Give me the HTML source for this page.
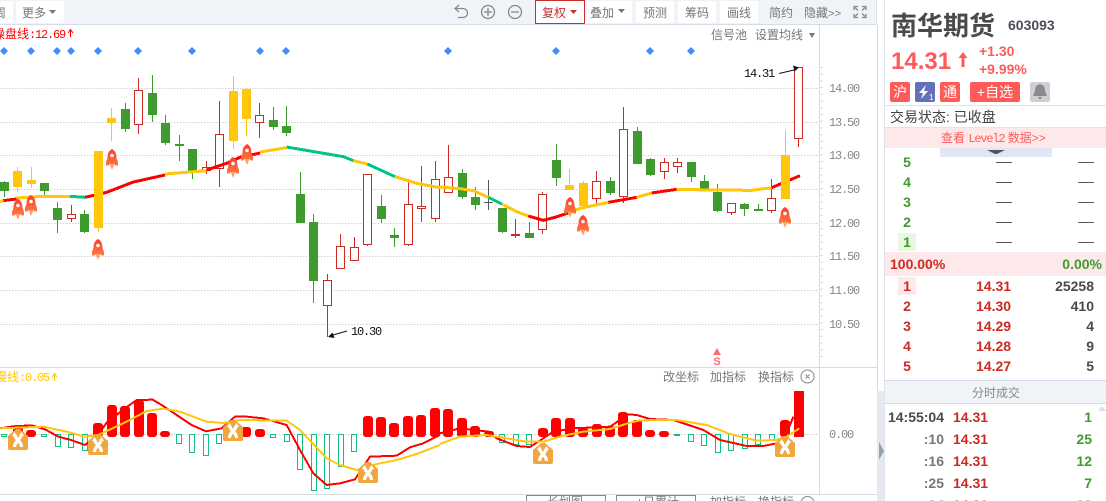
<!DOCTYPE html>
<html lang="zh"><head><meta charset="utf-8"><title>南华期货</title>
<style>
html,body{margin:0;padding:0;background:#fff;width:1106px;height:501px;overflow:hidden}
svg{display:block}
text{font-family:"Liberation Sans","Noto Sans CJK SC",sans-serif}
.c{font-size:12px;fill:#777;font-family:"Liberation Sans","Noto Sans CJK SC",sans-serif}
.m{font-family:"Liberation Mono","Noto Sans CJK SC",monospace;font-size:12px;letter-spacing:-1.2px}
.b{font-weight:bold;font-size:14px}
.g{fill:#3f9a2f}.r{fill:#cc2a22}.k{fill:#4a4a4a}
</style></head><body>
<svg width="1106" height="501" viewBox="0 0 1106 501" xmlns="http://www.w3.org/2000/svg">
<defs>
<linearGradient id="rg" x1="0" y1="0" x2="0" y2="1"><stop offset="0" stop-color="#ff3a30"/><stop offset="1" stop-color="#ff7a40"/></linearGradient>
<symbol id="rk" viewBox="0 0 12 21"><path d="M6 0C9.500 2 10.500 5 10.500 9L12 13V16.500H9.500L8.500 15H3.500L2.500 16.500H0V13L1.500 9C1.500 5 2.500 2 6 0Z" fill="url(#rg)"/><circle cx="6" cy="6.500" r="1.800" fill="#fff"/><path d="M3.500 15H8.500L6 21Z" fill="#ffa070"/></symbol>
<symbol id="xx" viewBox="0 0 20 21"><path d="M0 7L8 0H12L20 7V19Q20 21 18 21H2Q0 21 0 19Z" fill="#f2a640"/><path d="M6.500 5C6.500 10 13.500 12 13.500 18M13.500 5C13.500 10 6.500 12 6.500 18" fill="none" stroke="#fff" stroke-width="3.200"/><path d="M4 7L6.500 3L9 7M11 7L13.500 3L16 7" fill="#fff"/></symbol>
</defs>

<!-- toolbar -->
<rect x="0" y="0" width="877" height="24" fill="#f0f4f9"/>
<rect x="0" y="24" width="877" height="1" fill="#d6dde8"/>
<rect x="0" y="1" width="13" height="22" fill="#fff"/>
<text x="-6" y="17" class="c">周</text>
<rect x="16" y="1" width="48" height="22" fill="#fff"/>
<text x="22" y="17" class="c">更多</text>
<path d="M49 10H56L52.500 14Z" fill="#777"/>

<g fill="none" stroke="#888" stroke-width="1.300">
<path d="M456 8.500H463A4.500 4.500 0 0 1 463 17.500H458"/><path d="M459 5L455 8.500L459 12"/>
<circle cx="488" cy="12" r="6.500"/><path d="M484 12H492M488 8V16"/>
<circle cx="515" cy="12" r="6.500"/><path d="M511 12H519"/>
<path d="M854 10V6.500H858M862 6.500H866V10M866 14V17.500H862M858 17.500H854V14M855 7.500L858 10.500M865 7.500L862 10.500M865 16.500L862 13.500M855 16.500L858 13.500"/>
</g>
<rect x="535.500" y="0.500" width="49" height="23" fill="#fff" stroke="#c9302c"/>
<text x="542" y="17" class="c" style="fill:#c9302c">复权</text>
<path d="M570 10H577L573.500 14Z" fill="#c9302c"/>
<rect x="587" y="1" width="45" height="22" fill="#fff"/><text x="590" y="17" class="c">叠加</text><path d="M618 9H625L621.500 13Z" fill="#777"/>
<rect x="636" y="1" width="38" height="22" fill="#fff"/><text x="643" y="17" class="c">预测</text>
<rect x="678" y="1" width="38" height="22" fill="#fff"/><text x="685" y="17" class="c">筹码</text>
<rect x="720" y="1" width="38" height="22" fill="#fff"/><text x="727" y="17" class="c">画线</text>
<text x="769" y="17" class="c">简约</text>
<text x="804" y="17" class="c">隐藏<tspan class="m" style="letter-spacing:0;font-size:11px">&gt;&gt;</tspan></text>

<!-- grid -->
<g stroke="#d0d0d0" stroke-dasharray="1.500 1.500" fill="none">
<path d="M0 88.500H819M0 122.500H819M0 155.500H819M0 189.500H819M0 223.500H819M0 256.500H819M0 290.500H819M0 324.500H819"/>
<path d="M0 434.500H819"/>
</g>
<!-- axes -->
<g fill="none" stroke="#d6dbe6">
<path d="M819.500 25V494M877.500 25V391M0 367.500H877M0 494.500H877"/>
<path d="M821.500 67V361" stroke-dasharray="1 5.720" style="stroke-width:3"/>
</g>

<text x="-7" y="38" style="font-size:12px;fill:#f00">操盘线<tspan class="m" style="fill:#f00">:12.69</tspan></text>
<path d="M70.500 37V30M68 33L70.500 29.500L73 33" fill="none" stroke="#f00"/>
<text x="711" y="39" class="c">信号池</text><text x="755" y="39" class="c">设置均线</text>
<path d="M809 33H815L812 38Z" fill="#777"/>

<!-- diamonds -->
<g fill="#3f8efc">
<path d="M4 47L8 51L4 55L0 51Z M31 47L35 51L31 55L27 51Z M57 47L61 51L57 55L53 51Z M71 47L75 51L71 55L67 51Z M98 47L102 51L98 55L94 51Z M138 47L142 51L138 55L134 51Z M192 47L196 51L192 55L188 51Z M260 47L264 51L260 55L256 51Z M286 47L290 51L286 55L282 51Z M448 47L452 51L448 55L444 51Z M556 47L560 51L556 55L552 51Z M650 47L654 51L650 55L646 51Z M691 47L695 51L691 55L687 51Z"/>
</g>

<!-- candles -->
<g shape-rendering="crispEdges">
<!-- green -->
<path fill="none" stroke="#3f9a2f" d="M4.500 181V197M44.500 183V195M57.500 202V233M84.500 210V233M125.500 103V132M152.500 75V122M165.500 115V145M179.500 135V161M192.500 149V179M273.500 107V130M286.500 106V136M300.500 172V223M313.500 214V303M381.500 195V223M394.500 228V247M462.500 169V199M475.500 187V210M502.500 208V233M529.500 222V238M556.500 144V186M610.500 177V195M637.500 127V164M650.500 158V176M691.500 162V182M704.500 175V190M717.500 184V212M744.500 203V216M758.500 204V211"/>
<path fill="#3f9a2f" d="M0 182H9V191H0ZM40 183H49V191H40ZM53 208H62V220H53ZM80 214H89V232H80ZM121 109H130V129H121ZM148 93H157V115H148ZM161 123H170V143H161ZM175 144H184V146H175ZM188 149H197V171H188ZM269 120H278V127H269ZM282 126H291V133H282ZM296 194H305V223H296ZM309 222H318V281H309ZM377 206H386V219H377ZM390 235H399V238H390ZM458 173H467V197H458ZM471 197H480V205H471ZM498 208H507V232H498ZM525 233H534V238H525ZM552 160H561V178H552ZM606 181H615V193H606ZM633 131H642V164H633ZM646 159H655V175H646ZM687 162H696V177H687ZM700 181H709V190H700ZM713 192H722V211H713ZM740 204H749V209H740ZM754 209H763V211H754Z"/>
<!-- dark cross -->
<path fill="none" stroke="#555" d="M488.500 180V210M484 202.500H493"/>
<!-- red -->
<path fill="none" stroke="#cc2a22" d="M71.500 205V214M71.500 219V222M138.500 78V90M138.500 125V134M206.500 161V167M206.500 171V174M219.500 101V134M219.500 169V187M259.500 103V115M259.500 122V138M327.500 274V280M327.500 305V337M340.500 234V246M354.500 237V247M367.500 245V246M408.500 179V204M408.500 245V246M421.500 166V206M421.500 208V222M435.500 161V179M435.500 218V222M448.500 145V177M515.500 219V238M542.500 192V194M542.500 229V234M596.500 171V181M596.500 199V204M623.500 107V129M623.500 197V203M664.500 158V162M664.500 171V179M677.500 158V162M677.500 167V173M731.500 212V215M771.500 179V198M771.500 210V213M798.500 139V147"/>
<g fill="#fff" stroke="#cc2a22">
<rect x="67.500" y="214.500" width="8" height="4"/>
<rect x="134.500" y="90.500" width="8" height="34"/>
<rect x="202.500" y="167.500" width="8" height="3"/>
<rect x="215.500" y="134.500" width="8" height="34"/>
<rect x="255.500" y="115.500" width="8" height="7"/>
<rect x="323.500" y="280.500" width="8" height="25"/>
<rect x="336.500" y="246.500" width="8" height="22"/>
<rect x="350.500" y="247.500" width="8" height="13"/>
<rect x="363.500" y="174.500" width="8" height="70"/>
<rect x="404.500" y="204.500" width="8" height="40"/>
<rect x="417.500" y="206.500" width="8" height="2"/>
<rect x="431.500" y="179.500" width="8" height="39"/>
<rect x="444.500" y="177.500" width="8" height="15"/>
<rect x="538.500" y="194.500" width="8" height="35"/>
<rect x="592.500" y="181.500" width="8" height="17"/>
<rect x="619.500" y="129.500" width="8" height="67"/>
<rect x="660.500" y="162.500" width="8" height="9"/>
<rect x="673.500" y="162.500" width="8" height="4"/>
<rect x="727.500" y="203.500" width="8" height="9"/>
<rect x="767.500" y="198.500" width="8" height="12"/>
<rect x="794.500" y="67.500" width="8" height="71"/>
</g>
<rect x="511" y="234" width="9" height="2" fill="#cc2a22"/>
<!-- yellow -->
<path fill="none" stroke="#ffc60b" d="M17.500 167V192M31.500 167V188M111.500 108V141M233.500 76V149M246.500 88V136M569.500 169V190M583.500 181V206"/>
<path fill="#ffc60b" d="M13 171H22V187H13ZM27 180H36V184H27ZM107 118H116V123H107ZM229 91H238V141H229ZM242 89H251V119H242ZM565 185H574V190H565ZM579 183H588V206H579Z"/>
</g>

<!-- MA line (coordinates at 3x) -->
<g fill="none" stroke-width="9" transform="scale(.33333)" shape-rendering="crispEdges">
<polyline stroke="#ffc60b" points="0,605 10,602"/>
<polyline stroke="#f00" points="10,602 50,597"/>
<polyline stroke="#ffc60b" points="50,594 110,590 210,589"/>
<polyline stroke="#00c587" points="210,589 255,592"/>
<polyline stroke="#f00" points="255,592 320,577 400,546 495,525"/>
<polyline stroke="#ffc60b" points="495,522 620,512"/>
<polyline stroke="#f00" points="620,510 680,490 720,472 780,459"/>
<polyline stroke="#ffc60b" points="780,456 860,443"/>
<polyline stroke="#00c587" points="860,441 1030,470 1060,482"/>
<polyline stroke="#ffc60b" points="1060,482 1102,492"/>
<polyline stroke="#00c587" points="1102,492 1185,530"/>
<polyline stroke="#ffc60b" points="1185,530 1250,550 1320,563"/>
</g>
<g fill="none" stroke-width="9" transform="translate(440 0) scale(.33333)" shape-rendering="crispEdges">
<polyline stroke="#ffc60b" points="-1,561 60,566 100,572 145,592"/>
<polyline stroke="#00c587" points="145,592 185,612"/>
<polyline stroke="#ffc60b" points="185,612 230,635 265,648"/>
<polyline stroke="#f00" points="265,648 310,661 345,652 390,637"/>
<polyline stroke="#ffc60b" points="390,637 420,625 505,607"/>
<polyline stroke="#f00" points="505,607 590,592"/>
<polyline stroke="#ffc60b" points="590,592 635,579"/>
<polyline stroke="#f00" points="635,579 710,568"/>
<polyline stroke="#ffc60b" points="710,568 815,570 935,571 995,563"/>
<polyline stroke="#f00" points="995,563 1080,527"/>
</g>
<!-- big yellow candles on top -->
<g shape-rendering="crispEdges" fill="#ffc60b">
<path d="M94 151H103V228H94Z"/><path stroke="#ffc60b" fill="none" d="M98.500 228V232M785.500 130V155"/><path d="M781 155H790V199H781Z"/>
</g>

<!-- rockets -->
<use href="#rk" x="12" y="199" width="12" height="21"/>
<use href="#rk" x="25" y="195" width="12" height="21"/>
<use href="#rk" x="92" y="239" width="12" height="21"/>
<use href="#rk" x="106" y="149" width="12" height="21"/>
<use href="#rk" x="227" y="157" width="12" height="21"/>
<use href="#rk" x="241" y="144" width="12" height="21"/>
<use href="#rk" x="564" y="197" width="12" height="21"/>
<use href="#rk" x="577" y="215" width="12" height="21"/>
<use href="#rk" x="779" y="207" width="12" height="21"/>

<!-- high low labels -->
<text x="744" y="77" class="m" style="fill:#111">14.31</text>
<path d="M779 73.500L794 70" stroke="#111" fill="none"/>
<path d="M799 67.500L793 65.500L794.500 71.500Z" fill="#111"/>
<text x="351" y="335" class="m" style="fill:#111">10.30</text>
<path d="M347 331L333 335" stroke="#111" fill="none"/>
<path d="M328 337L332.500 332.500L334.500 338Z" fill="#111"/>

<!-- y labels -->
<g class="m" fill="#888">
<text x="829" y="92" class="m" fill="#888">14.00</text>
<text x="829" y="126" class="m" fill="#888">13.50</text>
<text x="829" y="159" class="m" fill="#888">13.00</text>
<text x="829" y="193" class="m" fill="#888">12.50</text>
<text x="829" y="227" class="m" fill="#888">12.00</text>
<text x="829" y="260" class="m" fill="#888">11.50</text>
<text x="829" y="294" class="m" fill="#888">11.00</text>
<text x="829" y="328" class="m" fill="#888">10.50</text>
<text x="829" y="438" class="m" fill="#888">0.00</text>
</g>

<!-- S marker -->
<path d="M717 348L721 355H713Z" fill="#ff6a70"/>
<text x="717" y="365" text-anchor="middle" style="font-size:11px;font-weight:bold;fill:#ff6a70">S</text>

<!-- MACD header -->
<text x="-5" y="381" style="font-size:12px;fill:#ffc60b">慢线<tspan class="m" style="fill:#ffc60b">:0.05</tspan></text>
<path d="M54.500 381V374M52 377L54.500 373.500L57 377" fill="none" stroke="#ffc60b"/>
<text x="663" y="381" class="c">改坐标</text><text x="710" y="381" class="c">加指标</text><text x="758" y="381" class="c">换指标</text>
<circle cx="807.500" cy="376.500" r="6.500" fill="none" stroke="#888"/>
<path d="M805.500 374.500L809.500 378.500M809.500 374.500L805.500 378.500" stroke="#888"/>

<!-- MACD bars -->
<g fill="#f00">
<rect x="13" y="427" width="10" height="10" rx="3"/><rect x="26" y="430" width="10" height="7" rx="3"/>
<rect x="93" y="423" width="10" height="14" rx="3"/><rect x="107" y="405" width="10" height="32" rx="3"/>
<rect x="120" y="406" width="10" height="31" rx="3"/><rect x="134" y="400" width="10" height="37" rx="3"/>
<rect x="147" y="413" width="10" height="24" rx="3"/><rect x="160" y="431" width="10" height="6" rx="3"/>
<rect x="227" y="425" width="10" height="12" rx="3"/><rect x="241" y="427" width="10" height="10" rx="3"/>
<rect x="255" y="429" width="10" height="8" rx="3"/>
<rect x="363" y="416" width="10" height="21" rx="3"/><rect x="376" y="417" width="10" height="20" rx="3"/>
<rect x="389" y="423" width="10" height="14" rx="3"/><rect x="403" y="416" width="10" height="21" rx="3"/>
<rect x="416" y="415" width="10" height="22" rx="3"/><rect x="430" y="408" width="10" height="29" rx="3"/>
<rect x="443" y="409" width="10" height="28" rx="3"/><rect x="457" y="418" width="10" height="19" rx="3"/>
<rect x="470" y="426" width="10" height="11" rx="3"/><rect x="484" y="431" width="10" height="6" rx="3"/>
<rect x="538" y="428" width="10" height="9" rx="3"/><rect x="551" y="418" width="10" height="19" rx="3"/>
<rect x="565" y="418" width="10" height="19" rx="3"/><rect x="578" y="427" width="10" height="10" rx="3"/>
<rect x="592" y="424" width="10" height="13" rx="3"/><rect x="605" y="426" width="10" height="11" rx="3"/>
<rect x="618" y="412" width="10" height="25" rx="3"/><rect x="632" y="420" width="10" height="17" rx="3"/>
<rect x="645" y="430" width="10" height="7" rx="3"/><rect x="659" y="431" width="10" height="6" rx="3"/>
<rect x="780" y="420" width="10" height="17" rx="3"/><rect x="794" y="391" width="10" height="46"/>
</g>
<g fill="#fff" stroke="#10c080" shape-rendering="crispEdges">
<rect x="1.500" y="434.500" width="5" height="2"/><rect x="41.500" y="434.500" width="5" height="2"/>
<rect x="55.500" y="434.500" width="5" height="12"/><rect x="68.500" y="434.500" width="5" height="13"/>
<rect x="82.500" y="434.500" width="5" height="16"/><rect x="176.500" y="434.500" width="5" height="9"/>
<rect x="189.500" y="434.500" width="5" height="18"/><rect x="203.500" y="434.500" width="5" height="21"/>
<rect x="216.500" y="434.500" width="5" height="9"/><rect x="270.500" y="434.500" width="5" height="3"/>
<rect x="284.500" y="434.500" width="5" height="7"/><rect x="297.500" y="434.500" width="5" height="35"/>
<rect x="311.500" y="434.500" width="5" height="56"/><rect x="324.500" y="434.500" width="5" height="54"/>
<rect x="338.500" y="434.500" width="5" height="32"/><rect x="351.500" y="434.500" width="5" height="17"/>
<rect x="499.500" y="434.500" width="5" height="8"/><rect x="513.500" y="434.500" width="5" height="10"/>
<rect x="526.500" y="434.500" width="5" height="10"/><rect x="688.500" y="434.500" width="5" height="7"/>
<rect x="701.500" y="434.500" width="5" height="11"/><rect x="715.500" y="434.500" width="5" height="18"/>
<rect x="728.500" y="434.500" width="5" height="16"/><rect x="742.500" y="434.500" width="5" height="14"/>
<rect x="755.500" y="434.500" width="5" height="10"/><rect x="769.500" y="434.500" width="5" height="5"/>
</g>
<rect x="674" y="434" width="6" height="2" fill="#10c080"/>

<!-- MACD lines (coordinates at 3x) -->
<g fill="none" stroke-width="6" transform="translate(0 250) scale(.33333)" shape-rendering="crispEdges">
<polyline stroke="#f00" points="0,535 40,529 95,526 135,538 175,560 213,570 255,585 295,553 320,518 375,475 410,450 458,449 490,468 530,495 575,525 618,544 665,535 705,500 740,500 790,505 860,525 900,600 940,670 980,705 1020,700 1065,688 1100,635 1110,620 1190,617 1230,592 1270,580 1320,555"/>
<polyline stroke="#ffc60b" points="0,535 130,530 200,545 255,560 295,555 380,515 440,483 490,476 540,485 620,515 670,519 720,510 860,512 900,540 980,625 1020,645 1070,660 1130,642 1190,630 1250,612 1320,585"/>
</g>
<g fill="none" stroke-width="6" transform="translate(440 250) scale(.33333)" shape-rendering="crispEdges">
<polyline stroke="#f00" points="0,550 60,535 145,545 170,565 230,588 270,591 310,565 340,545 400,535 510,530 565,493 590,495 630,507 700,510 790,540 840,570 920,588 970,588 1010,580 1040,550 1060,500"/>
<polyline stroke="#ffc60b" points="0,582 60,560 140,555 200,565 260,575 310,575 370,557 430,545 510,537 570,518 600,511 710,510 800,525 870,552 950,572 1010,570 1040,560 1078,535"/>
</g>

<!-- X icons -->
<use href="#xx" x="8" y="429" width="20" height="21"/>
<use href="#xx" x="88" y="434" width="20" height="21"/>
<use href="#xx" x="223" y="420" width="20" height="21"/>
<use href="#xx" x="358" y="462" width="20" height="21"/>
<use href="#xx" x="533" y="443" width="20" height="21"/>
<use href="#xx" x="775" y="436" width="20" height="21"/>

<!-- bottom cut-off row -->
<rect x="526.500" y="495.500" width="79" height="12" fill="#fff" stroke="#888"/>
<rect x="616.500" y="495.500" width="79" height="12" fill="#fff" stroke="#888"/>
<text x="547" y="506" class="c">长划图</text><text x="636" y="506" class="c">+日累计</text>
<text x="710" y="506" class="c">加指标</text><text x="758" y="506" class="c">换指标</text>
<circle cx="807.500" cy="503" r="6.500" fill="none" stroke="#888"/>

<!-- divider strip -->
<rect x="877" y="391" width="7" height="110" fill="#e6e9f2"/>
<rect x="876" y="0" width="1" height="25" fill="#dfe3ec"/>
<path d="M879 442L884 451L879 460Z" fill="#9aa0ae"/>
<rect x="884" y="0" width="1" height="501" fill="#dfe3ec"/>

<!-- right header -->
<text x="891" y="35" style="font-size:26px;font-weight:bold;fill:#4a4a4a;font-family:'Noto Sans CJK SC','Liberation Sans',sans-serif">南华期货</text>
<text x="1008" y="30" class="b" style="fill:#4a4f5a">603093</text>
<text x="891" y="69" style="font-size:24px;font-weight:bold;fill:#ff5a5a">14.31</text>
<path d="M961.500 67V58H958.500L963 52L967.500 58H964.500V67Z" fill="#ff5a5a"/>
<text x="979" y="56" class="b" style="fill:#ff5a5a">+1.30</text>
<text x="979" y="74" class="b" style="fill:#ff5a5a">+9.99%</text>

<rect x="890" y="82" width="20" height="20" rx="2" fill="#ff5a5a"/>
<text x="900" y="97" text-anchor="middle" style="font-size:14px;fill:#fff">沪</text>
<rect x="915" y="82" width="20" height="20" rx="2" fill="#6470bb"/>
<path d="M926 85L919 93H923L921 99L928 91H924Z" fill="#fff"/><text x="929" y="100" style="font-size:8px;fill:#fff">1</text>
<rect x="940" y="82" width="20" height="20" rx="2" fill="#ff5a5a"/>
<text x="950" y="97" text-anchor="middle" style="font-size:14px;fill:#fff">通</text>
<rect x="970" y="82" width="50" height="20" rx="2" fill="#ff5a5a"/>
<text x="995" y="97" text-anchor="middle" style="font-size:14px;fill:#fff">+自选</text>
<rect x="1030" y="82" width="20" height="20" rx="2" fill="#d0d0d4"/>
<path d="M1040 84Q1045 85 1045 91L1047 96H1033L1035 91Q1035 85 1040 84ZM1038 97H1042L1040 100Z" fill="#8a8a8e"/>

<rect x="885" y="105" width="221" height="1" fill="#dfe3ec"/>
<text x="890" y="122" style="font-size:14px;fill:#444">交易状态: 已收盘</text>
<rect x="885" y="127" width="221" height="1" fill="#dfe3ec"/>
<rect x="885" y="128" width="221" height="20" fill="#fde9e9"/>
<text x="941" y="142" style="font-size:12px;fill:#ff5a5a">查看 <tspan style="font-family:'Liberation Mono',monospace;font-size:12px;letter-spacing:-1.200px">Level2</tspan> 数据&gt;&gt;</text>
<rect x="940" y="148" width="112" height="9" fill="#e0e6f5"/>
<path d="M987 150H1005L997 154H995Z" fill="#555"/>

<!-- sell -->
<g class="b g" text-anchor="middle">
<text x="907" y="167" class="b g">5</text><text x="907" y="187" class="b g">4</text>
<text x="907" y="207" class="b g">3</text><text x="907" y="227" class="b g">2</text>
</g>
<rect x="898" y="233" width="18" height="18" fill="#e6f8e0"/>
<text x="907" y="247" text-anchor="middle" class="b g">1</text>
<path d="M996 162.500H1012M1078 162.500H1094M996 182.500H1012M1078 182.500H1094M996 202.500H1012M1078 202.500H1094M996 222.500H1012M1078 222.500H1094M996 242.500H1012M1078 242.500H1094" stroke="#555" fill="none"/>

<rect x="885" y="252" width="221" height="24" fill="#fde9e9"/>
<text x="890" y="269" class="b r">100.00%</text>
<text x="1102" y="269" text-anchor="end" class="b g">0.00%</text>

<!-- buy -->
<rect x="898" y="277" width="18" height="18" fill="#fde9e9"/>
<text x="907" y="291" text-anchor="middle" class="b r">1</text><text x="976" y="291" class="b r">14.31</text><text x="1094" y="291" text-anchor="end" class="b k">25258</text>
<text x="907" y="311" text-anchor="middle" class="b r">2</text><text x="976" y="311" class="b r">14.30</text><text x="1094" y="311" text-anchor="end" class="b k">410</text>
<text x="907" y="331" text-anchor="middle" class="b r">3</text><text x="976" y="331" class="b r">14.29</text><text x="1094" y="331" text-anchor="end" class="b k">4</text>
<text x="907" y="351" text-anchor="middle" class="b r">4</text><text x="976" y="351" class="b r">14.28</text><text x="1094" y="351" text-anchor="end" class="b k">9</text>
<text x="907" y="371" text-anchor="middle" class="b r">5</text><text x="976" y="371" class="b r">14.27</text><text x="1094" y="371" text-anchor="end" class="b k">5</text>

<rect x="885" y="380" width="221" height="23" fill="#f0f3f8"/>
<path d="M885 380.500H1106M885 403.500H1106" stroke="#d6dbe6"/>
<text x="996" y="397" text-anchor="middle" class="c" style="fill:#888">分时成交</text>
<path d="M1098 411L1102 406L1106 411Z" fill="#dcdfe6"/>

<!-- trades -->
<text x="944" y="422" text-anchor="end" class="b k">14:55:04</text><text x="953" y="422" class="b r">14.31</text><text x="1092" y="422" text-anchor="end" class="b g">1</text>
<text x="944" y="444" text-anchor="end" class="b" style="fill:#777">:10</text><text x="953" y="444" class="b r">14.31</text><text x="1092" y="444" text-anchor="end" class="b g">25</text>
<text x="944" y="466" text-anchor="end" class="b" style="fill:#777">:16</text><text x="953" y="466" class="b r">14.31</text><text x="1092" y="466" text-anchor="end" class="b g">12</text>
<text x="944" y="488" text-anchor="end" class="b" style="fill:#777">:25</text><text x="953" y="488" class="b r">14.31</text><text x="1092" y="488" text-anchor="end" class="b g">7</text>
<text x="944" y="510" text-anchor="end" class="b" style="fill:#777">:34</text><text x="953" y="510" class="b r">14.31</text><text x="1092" y="510" text-anchor="end" class="b g">33</text>
</svg>
</body></html>
